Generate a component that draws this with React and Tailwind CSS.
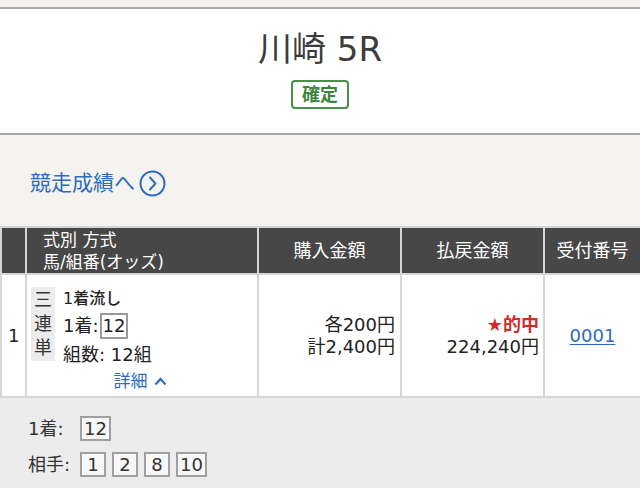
import React from 'react';

const font = { fontFamily: '"DejaVu Sans", "Noto Sans CJK JP", sans-serif' };

const NumBox = ({ n }) => (
  <span className="inline-flex h-[25px] min-w-[26px] items-center justify-center border-2 border-[#a0a0a0] bg-[#f7f7f7] px-[2px] leading-none">
    {n}
  </span>
);

export default function App() {
  return (
    <div className="min-h-[488px] w-[640px] overflow-hidden bg-[#f4f3f0] text-[#333]" style={font}>
      <div className="h-[9px] border-b-2 border-[#a8a8a8]" />

      {/* レース名 */}
      <div className="flex h-[126px] flex-col items-center border-b-2 border-[#a8a8a8] bg-white pt-[17px]">
        <h1 className="text-[34px] leading-[46px] font-normal text-[#3c3c3c]">川崎 5R</h1>
        <span className="mt-[8px] flex h-[29px] w-[58px] items-center justify-center rounded-[4px] border-2 border-[#4a8f4a] text-[18px] font-bold text-[#3d853d]">
          確定
        </span>
      </div>

      {/* リンク */}
      <div className="flex h-[91px] items-center px-[30px] pt-[6px]">
        <a className="flex items-center gap-[4px] text-[21px] text-[#2c6bbd]">
          競走成績へ
          <svg width="27" height="27" viewBox="0 0 27 27" fill="none" stroke="#2c6bbd" strokeWidth="2">
            <circle cx="13.5" cy="13.5" r="12" />
            <path d="M11 7.5 L16.5 13.5 L11 19.5" strokeLinecap="round" strokeLinejoin="round" />
          </svg>
        </a>
      </div>

      {/* 投票内容 */}
      <table className="w-[640px] table-fixed border-collapse text-[18px]">
        <colgroup>
          <col className="w-[25px]" />
          <col className="w-[232px]" />
          <col className="w-[143px]" />
          <col className="w-[143px]" />
          <col className="w-[97px]" />
        </colgroup>
        <thead>
          <tr className="h-[47px] bg-[#474747] text-white">
            <th className="border-2 border-[#d6d6d6]" />
            <th className="border-2 border-[#d6d6d6] pl-[16px] text-left font-normal text-[17px] leading-[22px]">
              <div>式別 方式</div>
              <div>馬/組番(オッズ)</div>
            </th>
            <th className="border-2 border-[#d6d6d6] font-normal">購入金額</th>
            <th className="border-2 border-[#d6d6d6] font-normal">払戻金額</th>
            <th className="border-2 border-[#d6d6d6] font-normal">受付番号</th>
          </tr>
        </thead>
        <tbody>
          <tr className="h-[123px] bg-white text-[#222]">
            <td className="border-2 border-[#d6d6d6] pl-[6px]">1</td>
            <td className="border-2 border-[#d6d6d6] px-[4px] align-top">
              <div className="mt-[12px] flex gap-[8px]">
                <div className="flex h-[74px] w-[24px] flex-col items-center justify-between bg-[#ececec] py-[2px] text-[18px] leading-[22px] text-[#333]">
                  <span>三</span>
                  <span>連</span>
                  <span>単</span>
                </div>
                <div className="flex flex-col leading-[24px]">
                  <span className="text-[16px] font-medium">1着流し</span>
                  <span className="mt-[2px] flex items-center">
                    1着:
                    <span className="ml-[1px] inline-flex h-[26px] items-center border-2 border-[#9a9a9a] px-[1px] leading-none">12</span>
                  </span>
                  <span className="mt-[4px]">組数: 12組</span>
                </div>
              </div>
              <div className="mt-[2px] flex items-center justify-center gap-[6px] pr-[4px] text-[17px] text-[#2c6bbd]">
                詳細
                <svg width="13" height="9" viewBox="0 0 13 9" fill="none" stroke="#2c6bbd" strokeWidth="2.2">
                  <path d="M1.5 7.5 L6.5 2 L11.5 7.5" />
                </svg>
              </div>
            </td>
            <td className="border-2 border-[#d6d6d6] pr-[5px] text-right leading-[22px]">
              <div>各200円</div>
              <div>計2,400円</div>
            </td>
            <td className="border-2 border-[#d6d6d6] pr-[4px] text-right leading-[22px]">
              <div className="font-bold text-[#d02b2b]">★的中</div>
              <div>224,240円</div>
            </td>
            <td className="border-2 border-[#d6d6d6] text-center">
              <a className="text-[#2c6bbd] underline underline-offset-2">0001</a>
            </td>
          </tr>
        </tbody>
      </table>

      {/* 詳細 */}
      <div className="flex flex-col gap-[9px] bg-[#ececec] px-[28px] pt-[17px] pb-[14px] text-[18px] text-[#333]">
        <div className="flex items-center">
          <span className="w-[52px]">1着:</span>
          <NumBox n="12" />
        </div>
        <div className="flex items-center gap-[6px]">
          <span className="w-[46px]">相手:</span>
          <NumBox n="1" />
          <NumBox n="2" />
          <NumBox n="8" />
          <NumBox n="10" />
        </div>
      </div>
    </div>
  );
}
